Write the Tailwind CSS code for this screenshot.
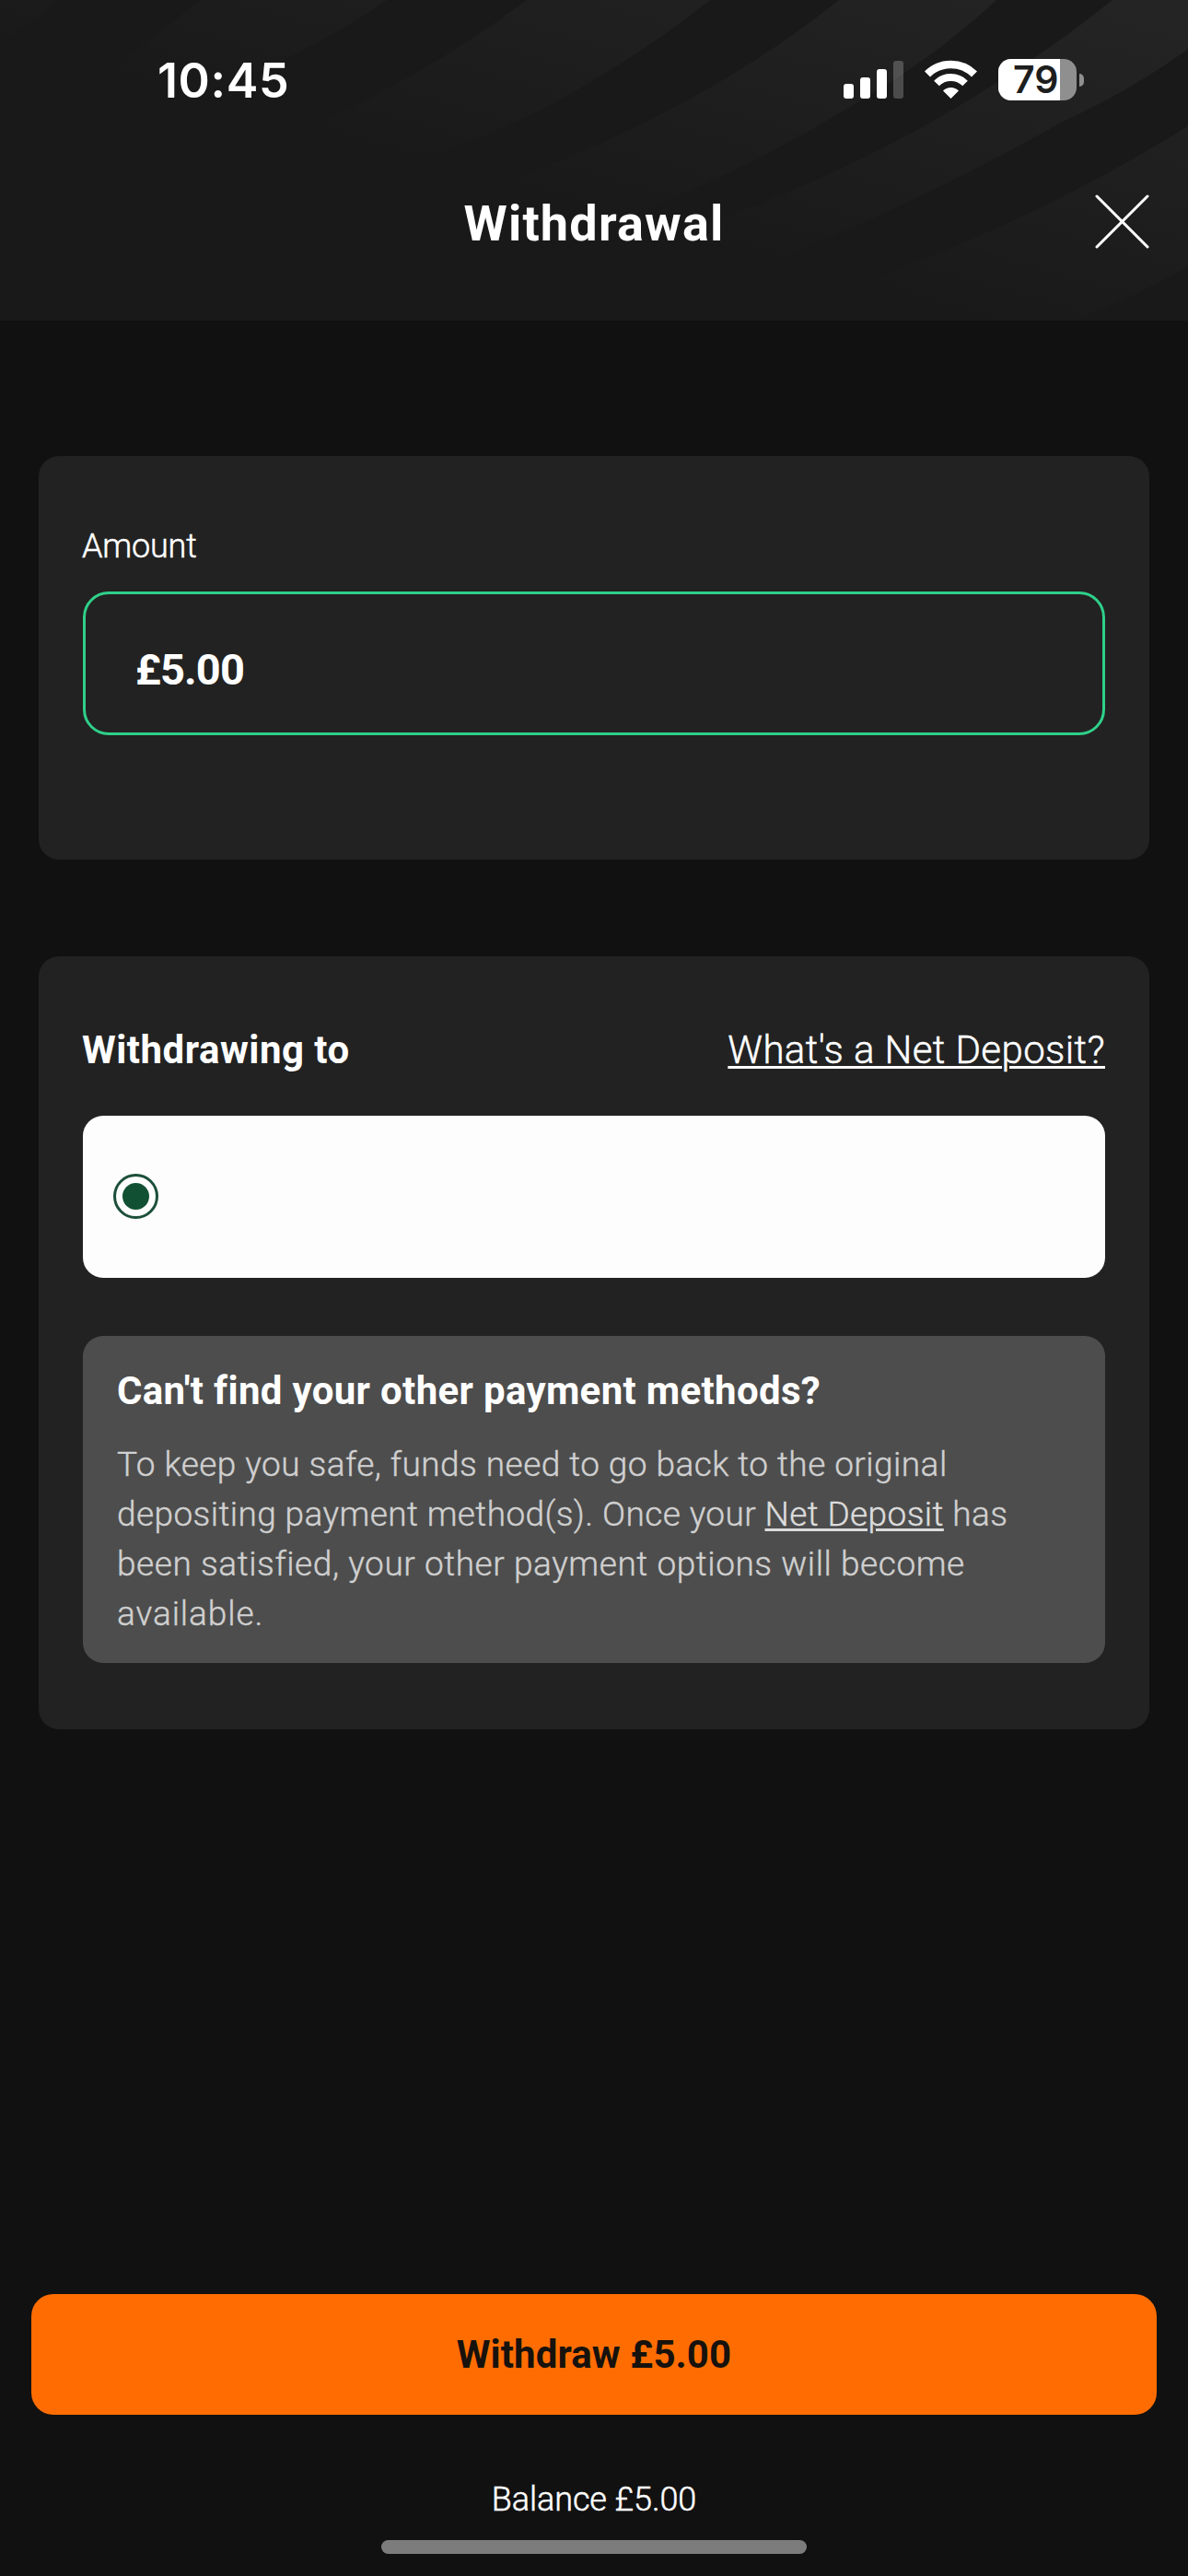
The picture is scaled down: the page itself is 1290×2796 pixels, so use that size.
<!DOCTYPE html>
<html lang="en">
<head>
    <meta charset="UTF-8">
    <meta name="viewport" content="width=device-width, initial-scale=1.0">
    <title>Withdrawal</title>
    <script src="https://cdn.jsdelivr.net/npm/@tailwindcss/browser@4"></script>
</head>
<body class="bg-[#111111] text-white font-['Roboto','Liberation_Sans',sans-serif]">
    <div class="flex flex-col w-[1290px] h-[2796px] overflow-hidden">

        <header class="relative h-[348px] shrink-0 bg-[#191919] overflow-hidden">
            <!-- curved stripes, fading out to the lower left -->
            <svg class="absolute inset-0" width="1290" height="348" viewBox="0 0 1290 348">
                <defs>
                    <linearGradient id="fade" gradientUnits="userSpaceOnUse" x1="540" y1="215" x2="648" y2="-170">
                        <stop offset="0" stop-color="#fff" stop-opacity="0" />
                        <stop offset="1" stop-color="#fff" stop-opacity="0.05" />
                    </linearGradient>
                </defs>
                <g fill="url(#fade)">
                    <path d="M0 0H62Q34 26 0 46Z" />
                    <path d="M218 0H420Q290 90 110 135L0 150Q120 80 218 0Z" />
                    <path d="M572 0H771Q680 72 572 127Q430 192 250 230L150 210Q400 130 572 0Z" />
                    <path d="M911 0H1082Q1008 68 921 117Q720 240 500 290L300 270Q680 185 911 0Z" />
                    <path d="M1208 0H1290V53Q1230 97 1152 133Q1000 220 810 295L600 300Q800 240 946 167Q1090 95 1208 0Z" />
                    <path d="M1290 137V290Q1235 320 1168 348H820Q1090 262 1290 137Z" />
                </g>
            </svg>

            <div class="relative flex items-center justify-between h-[176px] pl-[171px] pr-[113px]">
                <div class="font-['Inter',sans-serif] font-semibold text-[52px] leading-[56px] tracking-[0.6px]">10:45</div>
                <div class="flex items-center gap-[23px] -mt-[3px]">
                    <svg width="65" height="45" viewBox="0 0 65 45" fill="#fff">
                        <rect x="0" y="27" width="11" height="16" rx="3" />
                        <rect x="18" y="20" width="11" height="23" rx="3" />
                        <rect x="36" y="11" width="11" height="32" rx="3" />
                        <rect x="54" y="2" width="11" height="41" rx="3" fill-opacity=".22" />
                    </svg>
                    <svg width="57" height="45" viewBox="0 0 57 45" fill="none" stroke="#fff">
                        <path d="M3 16.5A36 36 0 0 1 54 16.5" stroke-width="8.5" />
                        <path d="M13 26.5A22 22 0 0 1 44 26.5" stroke-width="8" />
                        <path d="M28.500 43L20 34.500A12 12 0 0 1 37 34.500Z" fill="#fff" stroke="none" />
                    </svg>
                    <div class="flex items-center gap-[3px]">
                        <div class="w-[85px] h-[45px] rounded-[14px] bg-[#8f8f8f]">
                            <div class="w-[67px] h-full rounded-l-[14px] bg-white pl-[16px] font-['Inter',sans-serif] font-semibold text-[41px] leading-[45px] text-[#1e1e1e]">79</div>
                        </div>
                        <div class="w-[5px] h-[14px] rounded-r-full bg-[#8f8f8f]"></div>
                    </div>
                </div>
            </div>

            <div class="relative grid grid-cols-[1fr_auto_1fr] items-center mt-[14px] h-[105px] px-[42px]">
                <span></span>
                <h1 class="font-bold text-[54px] leading-[64px] tracking-[1.2px]">Withdrawal</h1>
                <svg class="justify-self-end -mt-[4px]" width="59" height="59" viewBox="0 0 59 59" fill="none" stroke="#fff" stroke-width="3" stroke-linecap="round">
                    <path d="M2 2L57 57M57 2L2 57" />
                </svg>
            </div>
        </header>

        <main class="px-[42px] flex flex-col">
            <section class="mt-[147px] h-[438px] rounded-[22px] bg-[#222222] px-[48px] pt-[71px]">
                <label class="block -ml-px font-light [-webkit-text-stroke:0.5px] text-[36px] leading-[54px] tracking-[-0.2px]">Amount</label>
                <div class="mt-[22px] h-[156px] rounded-[28px] border-3 border-[#2fd08a] pl-[54px] pt-[52px]">
                    <div class="font-bold text-[47px] leading-[60px] tracking-[-0.9px]">£5.00</div>
                </div>
            </section>

            <section class="mt-[105px] h-[839px] rounded-[22px] bg-[#222222] px-[48px] pt-[72px]">
                <div class="flex justify-between leading-[60px] text-[42px]">
                    <h2 class="-ml-px font-bold tracking-[0.5px]">Withdrawing to</h2>
                    <a class="font-light [-webkit-text-stroke:0.5px] tracking-[0.4px] underline decoration-3 underline-offset-[3px]">What's a Net Deposit?</a>
                </div>

                <div class="mt-[41px] h-[176px] rounded-[22px] bg-[#fdfdfd] flex items-center pl-[33px]">
                    <div class="-mt-px size-[49px] rounded-full border-3 border-[#1b4f3a] flex items-center justify-center">
                        <div class="size-[29px] rounded-full bg-[#125033]"></div>
                    </div>
                </div>

                <div class="mt-[63px] h-[355px] rounded-[22px] bg-[#4d4d4d] px-[37px] pt-[30px]">
                    <h3 class="font-bold text-[42px] leading-[60px] tracking-[0.33px]">Can't find your other payment methods?</h3>
                    <p class="mt-[23px] font-light [-webkit-text-stroke:0.4px] text-[37px] leading-[54px] text-[#d0d0d0] whitespace-nowrap">
                        <span class="tracking-[0.45px]">To keep you safe, funds need to go back to the original</span><br>
                        <span class="tracking-[0.4px]">depositing payment method(s). Once your <a class="underline decoration-3 underline-offset-[3px] text-[#dcdcdc]">Net Deposit</a> has</span><br>
                        <span class="tracking-[0.57px]">been satisfied, your other payment options will become</span><br>
                        <span class="tracking-[0.9px]">available.</span>
                    </p>
                </div>
            </section>
        </main>

        <footer class="mt-[613px] px-[34px] flex flex-col items-center">
            <button class="w-full h-[131px] rounded-[24px] bg-[#ff6d02] text-[#17120d] font-bold text-[42px] leading-[60px] tracking-[0.1px]">Withdraw £5.00</button>
            <div class="mt-[65px] font-light [-webkit-text-stroke:0.5px] text-[36px] leading-[54px] tracking-[-0.1px]">Balance £5.00</div>
            <div class="mt-[17px] w-[462px] h-[15px] rounded-full bg-[#7c7c7c]"></div>
        </footer>
    </div>
</body>
</html>
